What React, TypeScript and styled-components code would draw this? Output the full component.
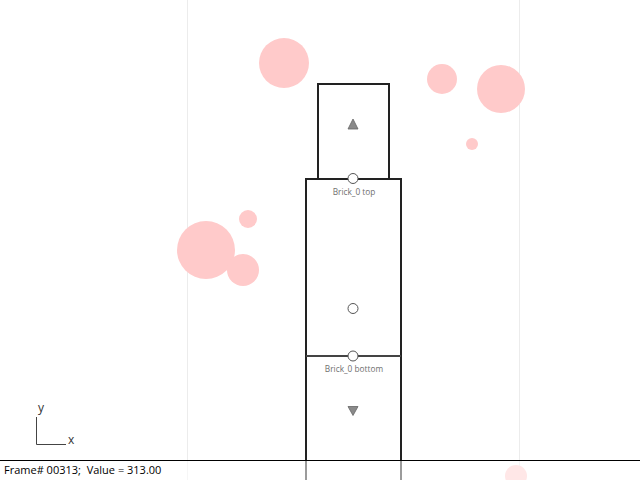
import styled, { createGlobalStyle } from "styled-components";

const GlobalStyle = createGlobalStyle`
    html, body {
        margin: 0;
        padding: 0;
        background: #ffffff;
    }
`;

interface Ball {
    x: number;
    y: number;
    r: number;
}

const balls: Ball[] = [
    { x: 284, y: 63, r: 25 },
    { x: 442, y: 79, r: 15 },
    { x: 501, y: 89, r: 24 },
    { x: 472, y: 144, r: 6 },
    { x: 248, y: 219, r: 9 },
    { x: 206, y: 250, r: 29 },
    { x: 243, y: 270, r: 16 },
    { x: 516, y: 476, r: 11 },
];

const App = () => {
    return (
        <>
            <GlobalStyle />
            <Viewport>
                <Scene width={640} height={480} viewBox="0 0 640 480">
                    <line x1={187.5} y1={0} x2={187.5} y2={480} stroke="#ececec" />
                    <line x1={519.5} y1={0} x2={519.5} y2={480} stroke="#ececec" />
                    {balls.map((b, i) => (
                        <circle key={i} cx={b.x} cy={b.y} r={b.r} fill="#ffcaca" />
                    ))}
                    {/* top brick */}
                    <rect x={318} y={84} width={71} height={95} fill="none" stroke="#222" strokeWidth={2} />
                    {/* main brick */}
                    <path d="M306 500 L306 179 L401 179 L401 500" fill="none" stroke="#222" strokeWidth={2} />
                    <line x1={306} y1={356} x2={401} y2={356} stroke="#444" strokeWidth={2} />
                    <polygon points="353,119 358,129 348,129" fill="#8a8a8a" stroke="#666" strokeWidth={0.8} />
                    <polygon points="348,406.5 358,406.5 353,415.5" fill="#8a8a8a" stroke="#666" strokeWidth={0.8} />
                    <circle cx={353} cy={178.5} r={5} fill="#fff" stroke="#555" />
                    <circle cx={353} cy={308.5} r={5} fill="#fff" stroke="#555" />
                    <circle cx={353} cy={356} r={5} fill="#fff" stroke="#555" />
                    {/* axis */}
                    <path d="M36.5 417 L36.5 444.5 L66 444.5" fill="none" stroke="#444" />
                </Scene>
                <Label $x={354} $y={186}>Brick_0 top</Label>
                <Label $x={354} $y={363}>Brick_0 bottom</Label>
                <AxisText $x={38} $y={400}>y</AxisText>
                <AxisText $x={68} $y={432}>x</AxisText>
                <StatusBar>Frame# 00313;&nbsp; Value = 313.00</StatusBar>
            </Viewport>
        </>
    );
};

export default App;

const Viewport = styled.div`
    position: relative;
    width: 640px;
    height: 480px;
    overflow: hidden;
    background: #ffffff;
`;

const Scene = styled.svg`
    display: block;
`;

const Label = styled.span<{ $x: number; $y: number }>`
    position: absolute;
    left: ${({ $x }) => $x}px;
    top: ${({ $y }) => $y}px;
    transform: translateX(-50%);
    font-family: "Open Sans", "Noto Sans", sans-serif;
    font-size: 8.3px;
    line-height: 12px;
    color: #6f6f6f;
    white-space: nowrap;
`;

const AxisText = styled.span<{ $x: number; $y: number }>`
    position: absolute;
    left: ${({ $x }) => $x}px;
    top: ${({ $y }) => $y}px;
    font-family: "Open Sans", "Noto Sans", sans-serif;
    font-size: 12px;
    line-height: 16px;
    color: #333;
`;

const StatusBar = styled.div`
    position: absolute;
    left: 0;
    right: 0;
    bottom: 0;
    height: 20px;
    padding-bottom: 2px;
    box-sizing: border-box;
    border-top: 1px solid #000;
    background: rgba(255, 255, 255, 0.55);
    padding-left: 4px;
    display: flex;
    align-items: center;
    font-family: "Open Sans", "Noto Sans", sans-serif;
    font-size: 11px;
    color: #000;
    white-space: pre;
`;
